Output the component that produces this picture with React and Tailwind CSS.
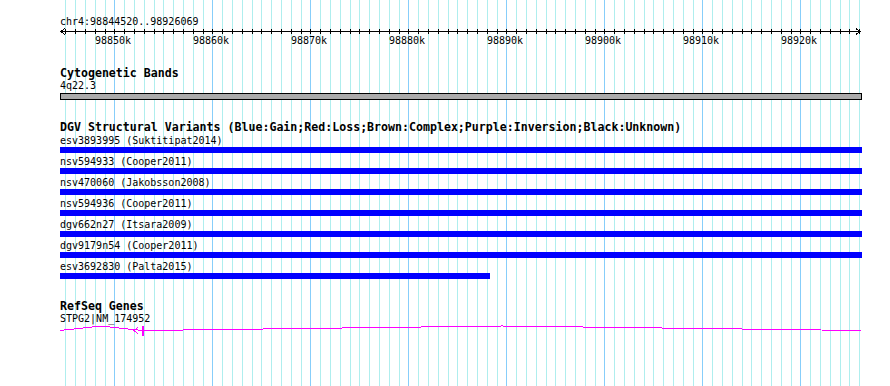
import React from 'react';

const K0 = 98850;
const X0 = 114.3;
const PX = 9.8;
const gx = (k) => Math.round(X0 + (k - K0) * PX);

const kbs = [];
for (let k = 98845; k <= 98926; k++) kbs.push(k);
const majors = kbs.filter((k) => k % 10 === 0);

const variants = [
  { name: 'esv3893995 (Suktitipat2014)', w: 802 },
  { name: 'nsv594933 (Cooper2011)', w: 802 },
  { name: 'nsv470060 (Jakobsson2008)', w: 802 },
  { name: 'nsv594936 (Cooper2011)', w: 802 },
  { name: 'dgv662n27 (Itsara2009)', w: 802 },
  { name: 'dgv9179n54 (Cooper2011)', w: 802 },
  { name: 'esv3692830 (Palta2015)', w: 430 },
];

const mono = "font-['DejaVu_Sans_Mono',monospace]";

function Grid() {
  return (
    <svg className="absolute inset-0" width="890" height="386" shapeRendering="crispEdges">
      {kbs.map((k) => (
        <rect key={k} x={gx(k)} y="0" width="1" height="386" fill={k % 10 === 0 ? '#87cefa' : '#afeeee'} />
      ))}
    </svg>
  );
}

function Ruler() {
  return (
    <svg className="block" width="802" height="20" shapeRendering="crispEdges">
      <rect x="0" y="3" width="801" height="1" fill="#000" />
      {kbs.map((k) => (
        <rect key={k} x={gx(k) - 60} y="1" width="1" height="5" fill="#000" />
      ))}
      <path d="M5 0.5 L1 3.5 L5 6.5" fill="none" stroke="#000" strokeWidth="1" />
      <path d="M796 0.5 L800 3.5 L796 6.5" fill="none" stroke="#000" strokeWidth="1" />
      {majors.map((k) => (
        <text
          key={k}
          x={gx(k) - 61}
          y="16"
          textAnchor="middle"
          fontFamily="DejaVu Sans Mono, monospace"
          fontSize="10"
          fill="#000"
        >
          {k}k
        </text>
      ))}
    </svg>
  );
}

function Gene() {
  return (
    <svg className="block" width="802" height="14" shapeRendering="crispEdges">
      <polyline points="0,6.5 41,2 82,6.5" fill="none" stroke="#ff00ff" strokeWidth="1" />
      <polyline points="84,6.5 442,2 801,6.5" fill="none" stroke="#ff00ff" strokeWidth="1" />
      <path d="M78 3.5 L74 6.5 L78 9.5" fill="none" stroke="#ff00ff" strokeWidth="1" />
      <rect x="82" y="2" width="2" height="10" fill="#ff00ff" />
    </svg>
  );
}

export default function App() {
  return (
    <div className="relative w-[890px] h-[386px] bg-white overflow-hidden text-black">
      <Grid />
      <div className={`relative flex flex-col pl-[60px] pt-[15px] ${mono}`}>
        <div className="h-[13px] text-[10px] leading-[13px] whitespace-nowrap">chr4:98844520..98926069</div>
        <Ruler />

        <div className="mt-[19px] h-[12px] text-[11.6px] leading-[13px] font-bold whitespace-nowrap">Cytogenetic Bands</div>
        <div className="h-[14px] text-[10px] leading-[13px]">4q22.3</div>
        <div className="w-[802px] h-[7px] border border-black bg-[#aaaaaa]" />

        <div className="mt-[21px] h-[12px] text-[11.6px] leading-[13px] font-bold whitespace-nowrap">
          DGV Structural Variants (Blue:Gain;Red:Loss;Brown:Complex;Purple:Inversion;Black:Unknown)
        </div>
        {variants.map((v) => (
          <div key={v.name} className="flex flex-col mb-[1px]">
            <div className="h-[14px] text-[10px] leading-[15px] whitespace-nowrap">{v.name}</div>
            <div className="h-[6px] bg-[#0000ff]" style={{ width: v.w }} />
          </div>
        ))}

        <div className="mt-[20px] h-[12px] text-[11.6px] leading-[13px] font-bold whitespace-nowrap">RefSeq Genes</div>
        <div className="h-[12px] text-[10px] leading-[14.2px] whitespace-nowrap">STPG2|NM_174952</div>
        <Gene />
      </div>
    </div>
  );
}
